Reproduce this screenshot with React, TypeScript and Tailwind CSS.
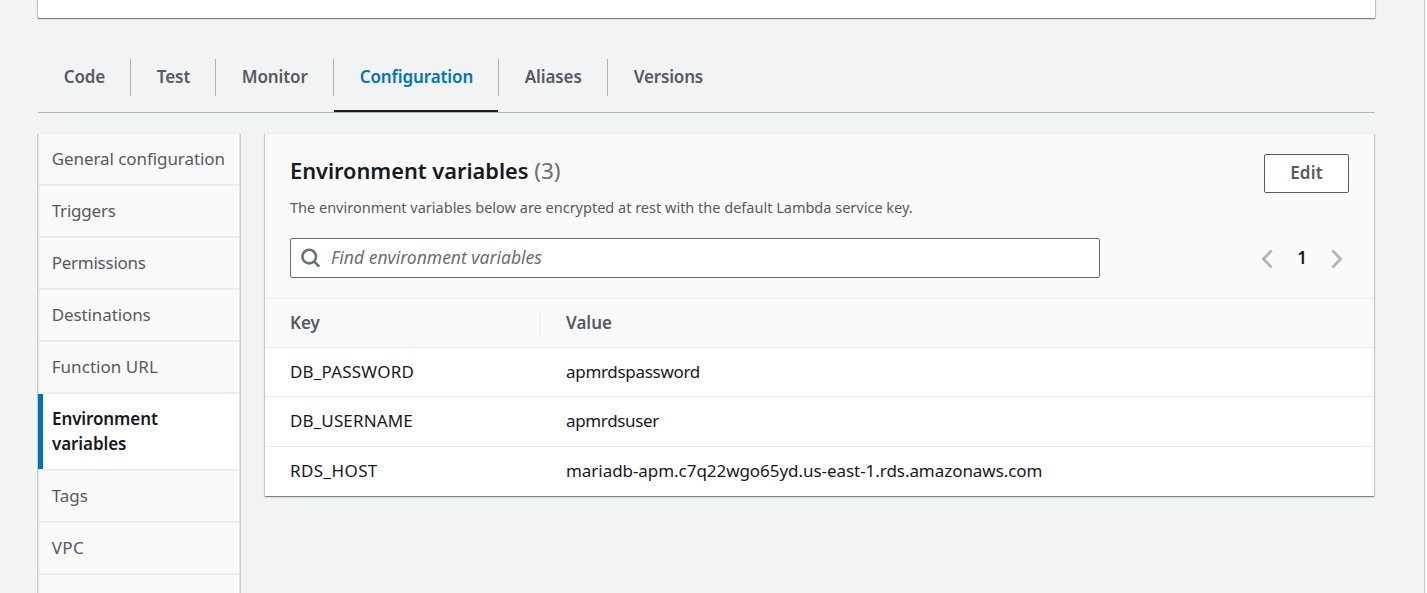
const tabs = [
  { label: 'Code', width: 'w-[93px]', tracking: 'tracking-[-0.15px]' },
  { label: 'Test', width: 'w-[85px]', tracking: 'tracking-[0px]' },
  { label: 'Monitor', width: 'w-[118px]', tracking: 'tracking-[-0.1px]' },
  { label: 'Configuration', width: 'w-[165px]', tracking: 'tracking-[-0.1px]', active: true },
  { label: 'Aliases', width: 'w-[109px]', tracking: 'tracking-[-0.1px]' },
  { label: 'Versions', width: 'w-[120px]', tracking: 'tracking-[-0.15px]' },
];

const sections = [
  { label: 'General configuration', tracking: 'tracking-[-0.07px]' },
  { label: 'Triggers', tracking: 'tracking-[-0.2px]' },
  { label: 'Permissions', tracking: 'tracking-[-0.25px]' },
  { label: 'Destinations', tracking: 'tracking-[-0.1px]' },
  { label: 'Function URL', tracking: 'tracking-[0.05px]' },
  { label: 'Environment variables', tracking: 'tracking-[-0.1px]', active: true },
  { label: 'Tags', tracking: 'tracking-[0px]' },
  { label: 'VPC', tracking: 'tracking-[0.4px]' },
  { label: 'RDS databases', tracking: 'tracking-[-0.2px]', raised: true },
];

const variables = [
  { key: 'DB_PASSWORD', keyTracking: 'tracking-[0.2px]', value: 'apmrdspassword', tracking: 'tracking-[-0.3px]', height: 'h-[48px]' },
  { key: 'DB_USERNAME', keyTracking: 'tracking-[0.12px]', value: 'apmrdsuser', tracking: 'tracking-[-0.35px]', height: 'h-[49px]' },
  { key: 'RDS_HOST', keyTracking: 'tracking-[0.4px]', value: 'mariadb-apm.c7q22wgo65yd.us-east-1.rds.amazonaws.com', tracking: 'tracking-[-0.05px]', height: 'h-[49px]' },
];

function SearchIcon() {
  return (
    <svg width="20" height="20" viewBox="0 0 20 20" fill="none" stroke="#687078" strokeWidth="2.6" className="shrink-0">
      <circle cx="8.2" cy="8.6" r="6.8" />
      <path d="M12.8 13.2 18.2 18.6" />
    </svg>
  );
}

function Chevron({ direction }: { direction: 'left' | 'right' }) {
  return (
    <svg width="12" height="20" viewBox="0 0 12 20" fill="none" stroke="#aab7b8" strokeWidth="2.8" className="mt-[2px]">
      <path d={direction === 'left' ? 'M10.6 1.4 2.4 10l8.2 8.6' : 'M1.4 1.4 9.6 10l-8.2 8.6'} />
    </svg>
  );
}

function Tabs() {
  return (
    <nav className="mt-[39px] ml-[38px] flex h-[56px] w-[1337px] border-b border-[#aab7b8]">
      {tabs.map((tab, i) => (
        <div
          key={tab.label}
          className={`flex shrink-0 ${tab.width} flex-col justify-between ${tab.active ? 'text-[#0073bb]' : 'text-[#545b64]'}`}
        >
          <div
            className={`mt-[2px] flex h-[37px] items-center border-r pb-[3px] pl-[25.7px] text-[17px] leading-none font-semibold whitespace-nowrap ${tab.tracking} ${i < tabs.length - 1 ? 'border-[#aab7b8]' : 'border-transparent'}`}
          >
            {tab.label}
          </div>
          {tab.active && <div className="mr-px h-[2px] bg-[#16191f]" />}
        </div>
      ))}
    </nav>
  );
}

function Sidebar() {
  return (
    <aside className="h-[480px] w-[202px] shrink-0 border-x border-t border-x-[#dfe3e3] border-t-[#eaeded] bg-[#fafafa] shadow-[-1px_1px_0_0_#c5cccd,1px_1px_0_0_#c5cccd]">
      {sections.map((s) =>
        s.active ? (
          <div key={s.label} className="flex h-[77px]">
            <div className="-ml-px h-[75px] w-[5px] bg-[#0073bb]" />
            <div className={`flex-1 border-b-2 border-[#eaeded] bg-white pt-[12px] pr-[40px] pl-[9px] text-[17px] leading-[25px] font-semibold text-[#16191f] ${s.tracking}`}>
              {s.label}
            </div>
          </div>
        ) : (
          <div
            key={s.label}
            className={`flex h-[52px] items-center border-b-2 border-[#eaeded] ${s.raised ? 'pb-[4px]' : 'pb-[2px]'} pl-[12.7px] text-[17px] leading-[25px] whitespace-nowrap text-[#545b64] ${s.tracking}`}
          >
            {s.label}
          </div>
        ),
      )}
    </aside>
  );
}

function VariablesPanel() {
  return (
    <section className="ml-[25px] h-[363px] w-[1109px] shrink-0 border-t border-[#eaeded] bg-white shadow-[0_1px_1px_0_rgba(0,28,36,0.3),1px_1px_1px_0_rgba(0,28,36,0.15),-1px_1px_1px_0_rgba(0,28,36,0.15)]">
      <header className="h-[165px] border-b border-[#eaeded] bg-[#fafafa] px-[25px]">
        <div className="flex justify-between pt-[20px]">
          <div>
            <h2 className="mt-[3px] text-[21.75px] leading-[28px] font-semibold whitespace-pre text-[#16191f]">
              Environment variables <span className="text-[22.5px] font-normal text-[#687078]">(3)</span>
            </h2>
            <p className="mt-[12px] pb-px text-[14.5px] leading-[20px] text-[#545b64]">
              The environment variables below are encrypted at rest with the default Lambda service key.
            </p>
          </div>
          <button className="h-[39px] w-[85px] rounded-[2px] border border-[#545b64] bg-white pb-[3px] text-[17px] leading-none font-semibold tracking-[0.2px] text-[#545b64]">
            Edit
          </button>
        </div>
        <div className="mt-[20px] flex items-center justify-between">
          <div className="flex h-[40px] w-[810px] items-center rounded-[2px] border border-[#687078] bg-white pl-[10px]">
            <SearchIcon />
            <span className="ml-[10px] pb-px text-[17.5px] leading-none text-[#687078] italic">Find environment variables</span>
          </div>
          <div className="mr-[6px] flex items-center text-[17px] leading-none font-semibold text-[#16191f]">
            <Chevron direction="left" />
            <span className="w-[58px] pb-px text-center">1</span>
            <Chevron direction="right" />
          </div>
        </div>
      </header>
      <div className="flex h-[49px] items-center border-b border-[#eaeded] bg-[#fafafa] pl-[25px] text-[17px] leading-none font-semibold text-[#545b64]">
        <div className="flex h-[25px] w-[251px] items-center border-r border-[#eaeded] pb-[2px]">Key</div>
        <div className="pb-[2px] pl-[25px]">Value</div>
      </div>
      {variables.map((v, i) => (
        <div key={v.key} className={`flex ${v.height} ${i < 2 ? 'box-content border-b border-[#eaeded]' : ''} items-center pl-[25px] text-[17px] leading-none text-[#16191f]`}>
          <div className={`w-[276px] pb-[2px] ${v.keyTracking}`}>{v.key}</div>
          <div className={`pb-[2px] ${v.tracking}`}>{v.value}</div>
        </div>
      ))}
    </section>
  );
}

export default function App() {
  return (
    <div className="flex h-[593px] w-[1427px] overflow-hidden bg-white font-['Noto_Sans','Open_Sans',sans-serif]">
      <div className="h-[593px] w-[1425px] border-r border-[#c3cacd] bg-[#f2f3f3]">
        <div className="ml-[38px] h-[18px] w-[1337px] bg-white shadow-[0_1px_1px_0_rgba(0,28,36,0.5),1px_0_1px_0_rgba(0,28,36,0.15),-1px_0_1px_0_rgba(0,28,36,0.15)]" />
        <Tabs />
        <main className="mt-[20px] ml-[38px] flex items-start">
          <Sidebar />
          <VariablesPanel />
        </main>
      </div>
    </div>
  );
}
